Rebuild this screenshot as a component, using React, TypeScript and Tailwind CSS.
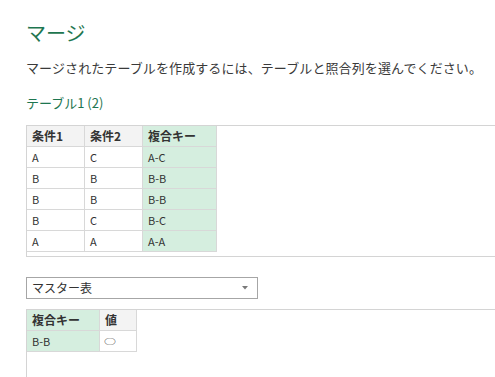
import React from "react";

const font = { fontFamily: '"Noto Sans CJK JP", "Noto Sans", sans-serif' };

const rows = [
  ["A", "C", "A-C"],
  ["B", "B", "B-B"],
  ["B", "B", "B-B"],
  ["B", "C", "B-C"],
  ["A", "A", "A-A"],
];

export default function App() {
  return (
    <div className="w-[495px] h-[377px] overflow-hidden bg-white pt-[20px] pl-[26px]" style={font}>
      <div className="text-[20px] leading-[26px] text-[#1e7650]">マージ</div>
      <div className="mt-[12px] text-[13px] leading-[20px] text-[#3a3a3a] whitespace-nowrap tracking-[0.1px]">
        マージされたテーブルを作成するには、テーブルと照合列を選んでください。
      </div>
      <div className="mt-[15px] text-[13px] leading-[20px] text-[#1e7650]">テーブル1 (2)</div>

      <div className="mt-[12px] border-t border-l border-b border-[#d4d4d4] pb-[4px]">
        <div className="grid grid-cols-[58px_58px_74px] w-max text-[#333]">
          <div className="h-[21px] border-r border-b border-[#d8d8d8] bg-[#f3f3f3] pl-[5px] text-[12px] font-bold leading-[20px]">条件1</div>
          <div className="h-[21px] border-r border-b border-[#d8d8d8] bg-[#f3f3f3] pl-[5px] text-[12px] font-bold leading-[20px]">条件2</div>
          <div className="h-[21px] border-r border-b border-[#d8d8d8] bg-[#d5eedf] pl-[5px] text-[12px] font-bold leading-[20px]">複合キー</div>
          {rows.map((r, i) => (
            <React.Fragment key={i}>
              <div className="h-[21px] border-r border-b border-[#d8d8d8] bg-white pl-[5px] text-[11px] leading-[20px]">{r[0]}</div>
              <div className="h-[21px] border-r border-b border-[#d8d8d8] bg-white pl-[5px] text-[11px] leading-[20px]">{r[1]}</div>
              <div className="h-[21px] border-r border-b border-[#d8d8d8] bg-[#d5eedf] pl-[5px] text-[11px] leading-[20px]">{r[2]}</div>
            </React.Fragment>
          ))}
        </div>
      </div>

      <div className="mt-[20px] w-[232px] h-[22px] border border-[#a6a6a6] flex items-center justify-between pl-[5px] pr-[9px]">
        <span className="text-[12px] leading-[20px] text-[#333]">マスター表</span>
        <svg width="6" height="4" viewBox="0 0 6 4">
          <path d="M0 0 L6 0 L3 3.5 Z" fill="#7a7a7a" />
        </svg>
      </div>

      <div className="mt-[10px] h-[80px] border-t border-l border-[#d4d4d4]">
        <div className="grid grid-cols-[73px_37px] w-max text-[#333]">
          <div className="h-[21px] border-r border-b border-[#d8d8d8] bg-[#d5eedf] pl-[5px] text-[12px] font-bold leading-[20px]">複合キー</div>
          <div className="h-[21px] border-r border-b border-[#d8d8d8] bg-[#f3f3f3] pl-[5px] text-[12px] font-bold leading-[20px]">値</div>
          <div className="h-[21px] border-r border-b border-[#d8d8d8] bg-[#d5eedf] pl-[5px] text-[11px] leading-[20px]">B-B</div>
          <div className="h-[21px] border-r border-b border-[#d8d8d8] bg-white pl-[4px] text-[12px] leading-[20px]">
            <span className="inline-block scale-y-[0.6]">○</span>
          </div>
        </div>
      </div>
    </div>
  );
}
